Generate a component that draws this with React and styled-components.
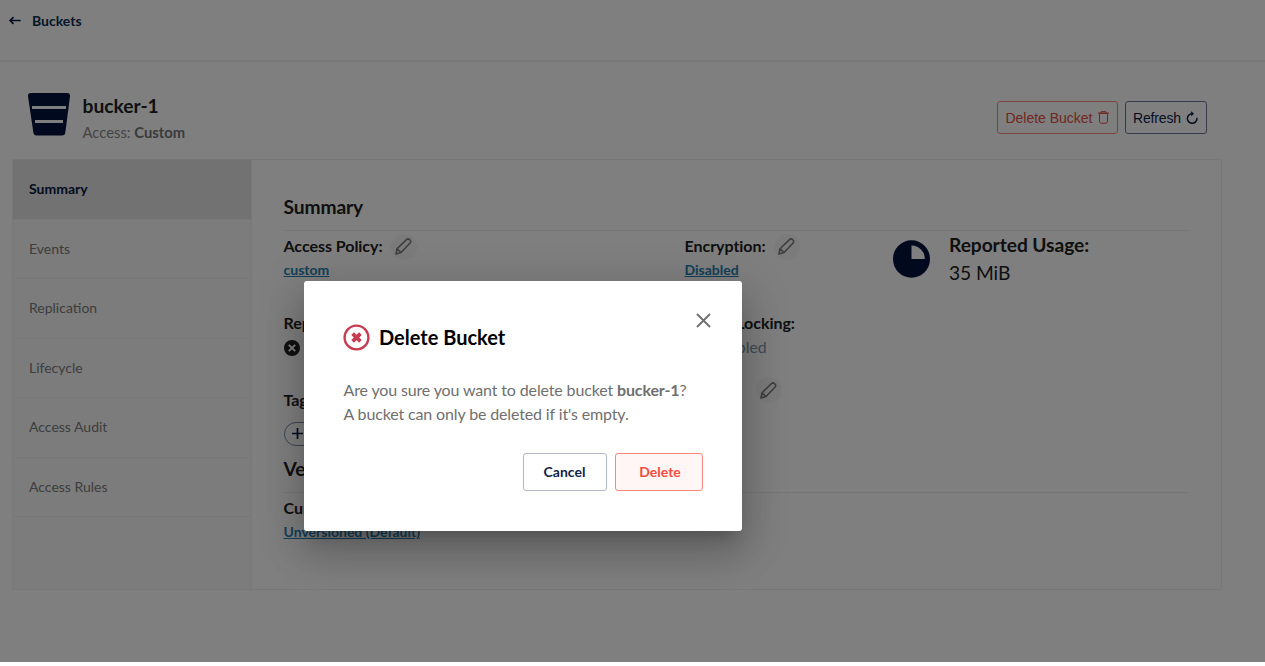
import React from "react";
import styled, { createGlobalStyle, css } from "styled-components";

const GlobalStyle = createGlobalStyle`
  * { box-sizing: border-box; }
  html, body { margin: 0; background: #fff; }
  body { font-family: Lato, "Liberation Sans", sans-serif; color: #212121; overflow: hidden; }
`;

const Page = styled.div`
  position: relative;
  height: 662px;
  overflow: hidden;
`;

const TopBar = styled.header`
  display: flex;
  align-items: flex-start;
  height: 62px;
  padding: 11px 9px;
  border-bottom: 2px solid #f3f3f3;
  color: #073052;
  font-size: 14px;
  font-weight: 700;
  line-height: 20px;
  svg { margin: 3px 11px 0 0; }
`;

const BucketHeader = styled.section`
  display: flex;
  height: 97px;
  padding: 31px 58px 0 28px;
`;

const BucketTitles = styled.div`
  flex: 1;
  padding-left: 12.5px;
`;

const BucketName = styled.h1`
  margin: 0;
  font-size: 19.2px;
  line-height: 26px;
`;

const AccessLine = styled.div`
  color: #8a8a8a;
  font-size: 14.8px;
  line-height: 26px;
  b { color: #777; }
`;

const Actions = styled.div`
  display: flex;
  gap: 7px;
  padding-top: 8px;
`;

const ActionButton = styled.button`
  display: flex;
  align-items: center;
  justify-content: space-between;
  width: ${(p) => p.$width}px;
  height: 33px;
  padding: 0 8px 0 ${(p) => (p.$danger ? 8 : 7.5)}px;
  border: 1px solid ${(p) => (p.$danger ? "#f58b83" : "#6a7694")};
  border-radius: 3px;
  background: none;
  color: ${(p) => (p.$danger ? "#e04f45" : "#081c42")};
  font: 14px "Liberation Sans", sans-serif;
  letter-spacing: ${(p) => (p.$danger ? -0.03 : -0.15)}px;
  white-space: nowrap;
`;

const Panel = styled.main`
  display: grid;
  grid-template-columns: 239px 1fr;
  width: 1210px;
  height: 431px;
  margin-left: 12px;
  border: 1px solid #f0f0f0;
`;

const Sidebar = styled.nav`
  background: #f8f8f8;
  border-right: 1px solid #f1f1f1;
`;

const Tab = styled.div`
  height: 59.5px;
  padding-left: 16px;
  border-bottom: 1px solid #f0f0f0;
  color: #7b7b7b;
  font-size: 14px;
  line-height: 58px;
  ${(p) =>
    p.$active &&
    css`
      background: #e4e4e4;
      color: #07193e;
      font-weight: 700;
    `}
`;

const Content = styled.div`
  padding: 31px 32px 0 31.5px;
`;

const SectionTitle = styled.h2`
  height: ${(p) => p.$height}px;
  margin: 0;
  border-bottom: 1px solid #ececec;
  font-size: 19.2px;
  letter-spacing: -0.1px;
  line-height: 31px;
`;

const SummaryGrid = styled.div`
  display: grid;
  grid-template-columns: 401px 208px 1fr;
  height: 222px;
`;

const Column = styled.div`
  display: flex;
  flex-direction: column;
`;

const Field = styled.div`
  height: 77.4px;
  padding-top: 3px;
`;

const QuotaField = styled(Field)`
  margin-top: -11px;
`;

const Label = styled.div`
  display: flex;
  align-items: center;
  gap: 8px;
  height: 25px;
  font-size: 16px;
  font-weight: 700;
  line-height: 24px;
  letter-spacing: -0.04px;
  white-space: nowrap;
`;

const LabelText = styled.span`
  min-width: ${(p) => p.$min || 0}px;
  padding-bottom: 2px;
`;

const EditButton = styled.span`
  display: grid;
  place-items: center;
  width: 26px;
  height: 26px;
  border-radius: 50%;
  background: #f7f7f7;
`;

const LinkValue = styled.a`
  display: block;
  color: #2781b0;
  font-size: 14px;
  font-weight: 700;
  line-height: 21px;
  text-decoration: underline;
`;

const TextValue = styled.div`
  display: flex;
  align-items: center;
  gap: 6px;
  height: 23px;
  color: #8592a8;
  font-size: 15.8px;
  span { padding-bottom: 2px; }
`;

const AddTag = styled.div`
  display: flex;
  align-items: center;
  width: 90px;
  height: 24px;
  margin-top: 8px;
  padding-left: 6px;
  gap: 6px;
  border: 1px solid #7f8ba5;
  border-radius: 12px;
  color: #081c42;
  font-size: 13px;
`;

const Usage = styled.div`
  display: flex;
  gap: 19.5px;
  padding-top: 9px;
`;

const UsageText = styled.div`
  margin-top: -9px;
  font-size: 19.2px;
  line-height: 28px;
  letter-spacing: -0.06px;
  b { display: block; }
`;

const Backdrop = styled.div`
  position: absolute;
  inset: 0;
  background: rgba(0, 0, 0, 0.5);
`;

const Dialog = styled.div`
  position: absolute;
  left: 304px;
  top: 281px;
  width: 437.5px;
  height: 249.5px;
  padding: 42px 39px 0 39.5px;
  border-radius: 3px;
  background: #fff;
  box-shadow: 0 11px 15px -7px rgba(0, 0, 0, 0.2), 0 24px 38px 3px rgba(0, 0, 0, 0.14),
    0 9px 46px 8px rgba(0, 0, 0, 0.12);
`;

const DialogTitle = styled.div`
  display: flex;
  align-items: center;
  gap: 9px;
  height: 29px;
  margin-left: -0.5px;
  color: #000;
  font-size: 20px;
  font-weight: 700;
  span { padding-bottom: 1px; }
`;

const CloseButton = styled.span`
  position: absolute;
  top: 32px;
  right: 31px;
  display: flex;
`;

const DialogBody = styled.p`
  margin: 26px 0 27px;
  color: #6f6f6f;
  font-size: 16px;
  line-height: 23.6px;
  letter-spacing: -0.14px;
  white-space: nowrap;
`;

const DialogActions = styled.div`
  display: flex;
  justify-content: flex-end;
  gap: 8px;
  padding-top: 1px;
`;

const DialogButton = styled.button`
  width: ${(p) => (p.$danger ? 88 : 84)}px;
  height: 38px;
  padding: 0 0 2px ${(p) => (p.$danger ? 3 : 0)}px;
  border: 1px solid ${(p) => (p.$danger ? "#fa8880" : "#b1b8c5")};
  border-radius: 3px;
  background: ${(p) => (p.$danger ? "#fff6f5" : "#fff")};
  color: ${(p) => (p.$danger ? "#f44b40" : "#11234b")};
  font: 700 14px Lato, sans-serif;
`;

const BackIcon = () => (
  <svg width="12" height="12" viewBox="0 0 12 12" fill="none" stroke="#081c42" strokeWidth="1.7" strokeLinecap="round" strokeLinejoin="round">
    <path d="M11 6.5H1.3M4 3.7L1 6.5l3 2.8" />
  </svg>
);

const BucketIcon = () => (
  <svg width="42" height="43" viewBox="0 0 42 43">
    <path fill="#03133f" d="M3 0h36q3.200 0 3 3.200l-4.700 36.600q-.5 2.700-3.200 2.700H8.600q-2.700 0-3.200-2.700L0 3.200Q-.2 0 3 0z" />
    <path fill="#fff" d="M4 13h34v3H4zM7 27h28v3H7z" />
  </svg>
);

const TrashIcon = () => (
  <svg width="11" height="13" viewBox="0 0 11 13" fill="none" stroke="#e04f45">
    <path d="M.3 2.200h10.400" strokeWidth="1.500" />
    <path d="M3.200 1.800V.6h4.600v1.200M1.500 3v7.500q0 1.700 1.700 1.700h4.600q1.700 0 1.700-1.700V3" />
  </svg>
);

const RefreshIcon = () => (
  <svg width="12" height="13" viewBox="0 0 12 13" fill="none" stroke="#081c42" strokeWidth="1.500">
    <path d="M10.900 6.800A4.800 4.800 0 1 1 6.100 2.700" />
    <path d="M5.200.2L8 2.700 5.200 5.200z" fill="#081c42" stroke="none" />
  </svg>
);

const PencilIcon = () => (
  <svg width="17" height="17" viewBox="0 0 17 17" fill="none" stroke="#7c7c7c" strokeWidth="1.600" strokeLinejoin="round">
    <path d="M1 16l1-5.200L11.500 1.600q1.400-1.300 3-.1 2 1.800.6 3.500L6 14.500zM2.200 10.800L6 14.500" />
  </svg>
);

const DisabledIcon = () => (
  <svg width="16" height="16" viewBox="0 0 16 16">
    <circle cx="8" cy="8" r="8" fill="#212121" />
    <path d="M4.800 4.800l6.400 6.400M11.200 4.800l-6.400 6.400" stroke="#fff" strokeWidth="1.900" />
  </svg>
);

const PlusIcon = () => (
  <svg width="13" height="11" viewBox="0 0 13 11" stroke="#081c42" strokeWidth="1.700">
    <path d="M1 5.500h11M6.500 0v11" />
  </svg>
);

const UsageIcon = () => (
  <svg width="37" height="38" viewBox="0 0 37 38">
    <ellipse cx="18.500" cy="19" rx="18.500" ry="18.800" fill="#03133f" />
    <path d="M18.500 5.500A13.300 13.300 0 0 1 31.800 19H18.500z" fill="#fff" />
  </svg>
);

const ConfirmDeleteIcon = () => (
  <svg width="27" height="27" viewBox="0 0 27 27" fill="none" stroke="#c83b51">
    <circle cx="13.500" cy="13.500" r="11.900" strokeWidth="2.400" />
    <path d="M9.600 9.600l7.800 7.800M17.400 9.600l-7.800 7.800" strokeWidth="3.700" />
  </svg>
);

const CloseIcon = () => (
  <svg width="15" height="15" viewBox="0 0 15 15" stroke="#707070" strokeWidth="1.900">
    <path d="M1 1l13 13M14 1L1 14" />
  </svg>
);

const tabs = ["Summary", "Events", "Replication", "Lifecycle", "Access Audit", "Access Rules"];

const FieldLabel = ({ children, editable, min }) => (
  <Label>
    <LabelText $min={min}>{children}</LabelText>
    {editable && <EditButton><PencilIcon /></EditButton>}
  </Label>
);

export default function App() {
  return (
    <Page>
      <GlobalStyle />
      <TopBar><BackIcon />Buckets</TopBar>
      <BucketHeader>
        <BucketIcon />
        <BucketTitles>
          <BucketName>bucker-1</BucketName>
          <AccessLine>Access: <b>Custom</b></AccessLine>
        </BucketTitles>
        <Actions>
          <ActionButton $danger $width={121}>Delete Bucket<TrashIcon /></ActionButton>
          <ActionButton $width={82.5}>Refresh<RefreshIcon /></ActionButton>
        </Actions>
      </BucketHeader>
      <Panel>
        <Sidebar>
          {tabs.map((name, i) => <Tab key={name} $active={i === 0}>{name}</Tab>)}
        </Sidebar>
        <Content>
          <SectionTitle $height={40}>Summary</SectionTitle>
          <SummaryGrid>
            <Column>
              <Field>
                <FieldLabel editable>Access Policy:</FieldLabel>
                <LinkValue>custom</LinkValue>
              </Field>
              <Field>
                <FieldLabel>Replication:</FieldLabel>
                <TextValue><DisabledIcon /><span>Disabled</span></TextValue>
              </Field>
              <Field>
                <FieldLabel>Tags:</FieldLabel>
                <AddTag><PlusIcon />Add tag</AddTag>
              </Field>
            </Column>
            <Column>
              <Field>
                <FieldLabel editable>Encryption:</FieldLabel>
                <LinkValue>Disabled</LinkValue>
              </Field>
              <Field>
                <FieldLabel>Object Locking:</FieldLabel>
                <TextValue><DisabledIcon /><span>Disabled</span></TextValue>
              </Field>
              <QuotaField>
                <FieldLabel editable min={63}>Quota:</FieldLabel>
              </QuotaField>
            </Column>
            <Usage>
              <UsageIcon />
              <UsageText><b>Reported Usage:</b>35 MiB</UsageText>
            </Usage>
          </SummaryGrid>
          <SectionTitle $height={40}>Versioning</SectionTitle>
          <Field>
            <FieldLabel>Current Status:</FieldLabel>
            <LinkValue>Unversioned (Default)</LinkValue>
          </Field>
        </Content>
      </Panel>
      <Backdrop />
      <Dialog>
        <CloseButton><CloseIcon /></CloseButton>
        <DialogTitle><ConfirmDeleteIcon /><span>Delete Bucket</span></DialogTitle>
        <DialogBody>
          Are you sure you want to delete bucket <b>bucker-1</b>?<br />
          A bucket can only be deleted if it's empty.
        </DialogBody>
        <DialogActions>
          <DialogButton>Cancel</DialogButton>
          <DialogButton $danger>Delete</DialogButton>
        </DialogActions>
      </Dialog>
    </Page>
  );
}
